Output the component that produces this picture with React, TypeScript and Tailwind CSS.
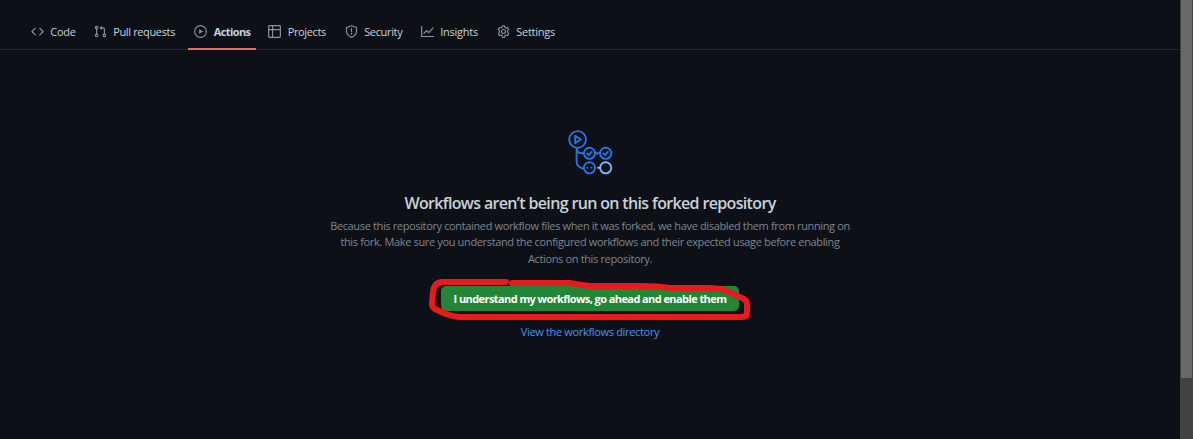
import type { ReactNode } from "react";

type Tab = { label: string; width: string; text: string; icon: ReactNode; active?: boolean };

const tabs: Tab[] = [
  {
    label: "Code", width: "w-[56.5px]", text: "tracking-[-0.2px]",
    icon: <path d="M5.2 3.8 1.1 8l4.1 4.2M10.8 3.8 14.9 8l-4.1 4.2" />,
  },
  {
    label: "Pull requests", width: "w-[94px]", text: "tracking-[-0.36px]",
    icon: (
      <>
        <circle cx="3.2" cy="3.2" r="1.5" />
        <circle cx="3.2" cy="12.8" r="1.5" />
        <circle cx="12.8" cy="12.8" r="1.5" />
        <path d="M3.2 4.8v6.4M12.8 11.2V5.5a2 2 0 0 0-2-2H8" />
        <path d="M9.8.8v5.4L7 3.5z" fill="currentColor" stroke="none" />
      </>
    ),
  },
  {
    label: "Actions", width: "w-[67.5px]", text: "tracking-[-0.6px]", active: true,
    icon: (
      <>
        <circle cx="8" cy="8" r="7.2" />
        <path d="M6.3 5.1v5.8L11.2 8z" fill="currentColor" stroke="none" />
      </>
    ),
  },
  {
    label: "Projects", width: "w-[70px]", text: "tracking-[-0.35px]",
    icon: (
      <>
        <rect x=".8" y=".8" width="14.4" height="14.4" rx="1" />
        <path d="M.8 5.7h14.4M5.7.8v14.4" />
      </>
    ),
  },
  {
    label: "Security", width: "w-[69.5px]", text: "tracking-[-0.35px]",
    icon: (
      <>
        <path d="M8 .9 14.2 3v4.5c0 3.5-2.3 6.1-6.2 7.7-3.9-1.6-6.2-4.2-6.2-7.7V3z" />
        <path d="M8 4.3v3.6M8 9.8v1.6" />
      </>
    ),
  },
  {
    label: "Insights", width: "w-[69.5px]", text: "tracking-[-0.25px]",
    icon: <path d="M.8 1.6v12.6h14.8M3.6 10.4l3.2-3.6 2.7 2.6 5.3-5.8" />,
  },
  {
    label: "Settings", width: "w-[72px]", text: "tracking-[-0.25px]",
    icon: (
      <>
        <circle cx="8" cy="8" r="2.4" />
        <path d="M6.7.9h2.6l.5 2 1.2.7 2-.6 1.5 2.4-1.5 1.5v2.2l1.5 1.5-1.5 2.4-2-.6-1.2.7-.5 2H6.7l-.5-2-1.2-.7-2 .6-1.5-2.4L3 9.1V6.9L1.5 5.4 3 3l2 .6 1.2-.7z" />
      </>
    ),
  },
];

function WorkflowGraphic() {
  return (
    <svg width="46" height="46" viewBox="0 0 46 46" fill="none" stroke="#1f78e8" strokeWidth="1.9" strokeLinecap="round" strokeLinejoin="round">
      <circle cx="10.6" cy="9.5" r="8.4" />
      <path d="M8.2 5.7v7.6l5.6-3.8z" />
      <path d="M9.6 18v13.5a7 7 0 0 0 7 7h.3M9.6 18c0 3.3 2 5.3 5.3 5.3h2M28.3 23.3h5" />
      <circle cx="22.5" cy="23.3" r="5.6" />
      <circle cx="38.7" cy="23.3" r="5.6" />
      <path d="m20.1 23.5 1.6 1.6 3-3.3M36.3 23.5l1.6 1.6 3-3.3" />
      <circle cx="22.5" cy="37.8" r="5.6" />
      <path d="M20.4 37.7h.1M24.4 37.7h.1" strokeWidth="1.9" />
      <path d="M31 37.8h2" stroke="#79b8ff" />
      <circle cx="38.7" cy="37.8" r="5.6" stroke="#79b8ff" />
    </svg>
  );
}

export default function App() {
  return (
    <div className="flex h-[439px] w-[1193px] overflow-hidden bg-[#0d1117] font-['Open_Sans','Noto_Sans',sans-serif] text-[#c9d1d9]">
      <div className="flex min-w-0 flex-1 flex-col">
        <nav className="flex h-[50px] shrink-0 items-end gap-[6.5px] border-b border-[#21262d] pl-[24.5px]">
          {tabs.map((tab) => (
            <a
              key={tab.label}
              className={`-mb-px flex h-[34px] shrink-0 items-center gap-[6.7px] border-b-2 pl-[6px] text-[11px] whitespace-nowrap ${tab.width} ${tab.text} ${tab.active ? "border-[#e5705a] font-bold" : "border-transparent"}`}
            >
              <svg className="mb-[2px] shrink-0 text-[#8b949e]" width="13" height="13" viewBox="0 0 16 16" fill="none" stroke="currentColor" strokeWidth="1.4" strokeLinecap="round" strokeLinejoin="round">
                {tab.icon}
              </svg>
              <span className="pt-px">{tab.label}</span>
            </a>
          ))}
        </nav>
        <main className="flex flex-col items-center pt-[80px]">
          <WorkflowGraphic />
          <h1 className="mt-[16px] text-[16px] leading-[22px] font-semibold tracking-[-0.65px] whitespace-nowrap">
            Workflows aren’t being run on this forked repository
          </h1>
          <div className="mt-[4px] flex flex-col items-center text-[11px] leading-[16.4px] whitespace-nowrap text-[#7d858f]">
            <span className="tracking-[-0.36px]">Because this repository contained workflow files when it was forked, we have disabled them from running on</span>
            <span className="tracking-[-0.35px]">this fork. Make sure you understand the configured workflows and their expected usage before enabling</span>
            <span className="tracking-[-0.35px]">Actions on this repository.</span>
          </div>
          <div className="relative mt-[19px] h-[26px] w-[298px]">
            <button className="flex h-[25px] w-full items-center justify-center rounded-[5px] bg-[#238636] pt-[2px] text-[11px] font-bold tracking-[-0.58px] whitespace-nowrap text-white">
              I understand my workflows, go ahead and enable them
            </button>
            <svg className="pointer-events-none absolute -top-[16px] -left-[21px]" width="340" height="60" viewBox="420 270 340 60" fill="none" stroke="#e81a1c" strokeWidth="6" strokeLinecap="round" strokeLinejoin="round">
              <path d="M506 282H441Q434 283 433 292L432 304Q432 308 437 310Q451 317 460 317H742Q747 317 747 312V304Q747 300 742 298L726 291Q720 288 706 288H670Q658 286 640 286H590Q580 285 570 283L512 283" />
            </svg>
          </div>
          <a className="mt-[12px] text-[11px] leading-[16px] tracking-[-0.33px] whitespace-nowrap text-[#4a91ea]">View the workflows directory</a>
        </main>
      </div>
      <div className="w-[13px] shrink-0 bg-[#424242] px-px">
        <div className="h-[378px] bg-[#686868]" />
      </div>
    </div>
  );
}
